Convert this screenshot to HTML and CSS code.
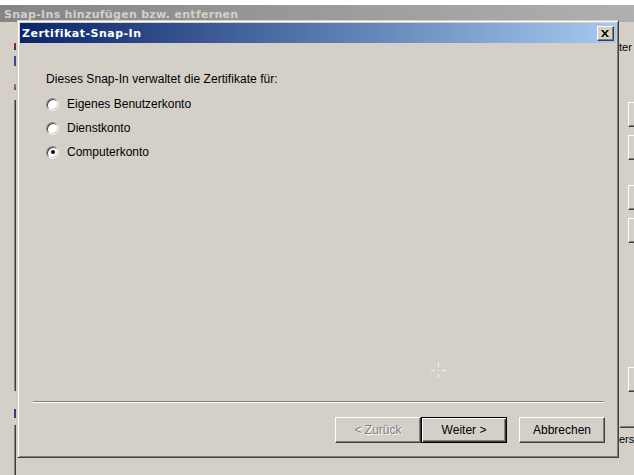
FILE: index.html
```html
<!DOCTYPE html>
<html lang="de">
<head>
<meta charset="utf-8">
<title>Zertifikat-Snap-In</title>
<link rel="stylesheet" href="styles.css">
</head>
<body>
<div class="desktop">
  <div class="bgwin">
    <div class="bg-title">Snap-Ins hinzufügen bzw. entfernen</div>
    <div class="bg-body">
      <div class="bg-left">
        <span class="frag frag-a"></span>
        <span class="frag frag-b"></span>
        <span class="frag frag-c"></span>
        <span class="list-edge"></span>
        <span class="frag frag-e"></span>
        <span class="desc-edge"></span>
      </div>
      <div class="bg-mid"></div>
      <div class="bg-right">
        <span class="peek-text">ter</span>
        <div class="bg-row">
          <span class="list-edge-r"></span>
          <div class="bg-buttons">
            <span class="bg-btn"></span>
            <span class="bg-btn b2"></span>
            <span class="bg-btn b3"></span>
            <span class="bg-btn b2"></span>
            <span class="bg-btn b5"></span>
          </div>
        </div>
        <div class="desc-box">
          <span class="peek-text peek-ers">ers</span>
        </div>
      </div>
    </div>
  </div>

  <div class="dialog">
    <div class="titlebar">
      <span class="title">Zertifikat-Snap-In</span>
      <span class="close-btn">
        <svg width="8" height="7" viewBox="0 0 8 7"><path d="M0 0H2L4 2.4L6 0H8L5.1 3.5L8 7H6L4 4.6L2 7H0L2.9 3.5Z" fill="#000"/></svg>
      </span>
    </div>
    <div class="content">
      <p class="intro">Dieses Snap-In verwaltet die Zertifikate für:</p>
      <div class="radios">
        <div class="radio-row"><span class="radio"></span><span>Eigenes Benutzerkonto</span></div>
        <div class="radio-row"><span class="radio"></span><span>Dienstkonto</span></div>
        <div class="radio-row"><span class="radio checked"></span><span>Computerkonto</span></div>
      </div>
      <div class="spacer"></div>
      <div class="separator"></div>
      <div class="button-row">
        <span class="btn btn-disabled">&lt; Zurück</span>
        <span class="btn btn-default">Weiter &gt;</span>
        <span class="btn btn-cancel">Abbrechen</span>
      </div>
    </div>
  </div>

  <svg class="cursor" width="15" height="15" viewBox="0 0 15 15">
    <g fill="#f2f1ec">
      <rect x="0" y="7" width="4" height="1"/>
      <rect x="11" y="7" width="4" height="1"/>
      <rect x="7" y="0" width="1" height="4"/>
      <rect x="7" y="11" width="1" height="4"/>
      <rect x="7" y="7" width="1" height="1"/>
    </g>
  </svg>
</div>
</body>
</html>
```

FILE: styles.css
```css
html, body {
  margin: 0;
  padding: 0;
  background: #ffffff;
}

.desktop {
  position: relative;
  width: 634px;
  height: 475px;
  overflow: hidden;
  background: #ffffff;
  font-family: "Liberation Sans", Arial, sans-serif;
  font-size: 12px;
  color: #000;
}

/* ---------- background window ---------- */
.bgwin {
  margin-top: 5px;
  display: flex;
  flex-direction: column;
  height: 470px;
}

.bg-title {
  height: 17px;
  line-height: 20px;
  padding-left: 4px;
  background: linear-gradient(to right, #858585, #b0b0b0);
  color: #d4d0c8;
  font-family: "DejaVu Sans", Verdana, sans-serif;
  font-weight: bold;
  font-size: 11px;
  letter-spacing: 0.3px;
  white-space: nowrap;
  overflow: hidden;
}

.bg-body {
  flex: 1;
  display: grid;
  grid-template-columns: 17px 1fr 15px;
  background: #d4d0c8;
}

.bg-left {
  display: flex;
  flex-direction: column;
  padding-left: 14px;
}

.frag {
  display: block;
  width: 2px;
}
.frag-a {
  margin-top: 21px;
  height: 7px;
  background: linear-gradient(#9a3030, #2a2f6a);
}
.frag-b {
  margin-top: 6px;
  height: 10px;
  background: #3a4a8e;
}
.frag-c {
  margin-top: 18px;
  height: 6px;
  background: linear-gradient(#c0763a, #3f5aa0);
}
.list-edge {
  display: block;
  margin-top: 10px;
  height: 291px;
  width: 2px;
  box-sizing: border-box;
  border-left: 1px solid #808080;
  background: #404040;
}
.frag-e {
  margin-top: 18px;
  height: 9px;
  background: #34407a;
}
.desc-edge {
  display: block;
  margin-top: 7px;
  flex: 1;
  width: 2px;
  box-sizing: border-box;
  border-left: 1px solid #808080;
  background: #404040;
}

.bg-right {
  display: flex;
  flex-direction: column;
  overflow: hidden;
}

.peek-text {
  display: block;
  margin-top: 19px;
  line-height: 13px;
  font-size: 11px;
  white-space: nowrap;
}

.bg-row {
  display: flex;
  margin-top: 48px;
}
.list-edge-r {
  display: block;
  margin-left: 2px;
  width: 1px;
  height: 293px;
  background: #ffffff;
}
.bg-buttons {
  display: flex;
  flex-direction: column;
  margin-left: 7px;
}
.bg-btn {
  display: block;
  width: 12px;
  height: 25px;
  box-sizing: border-box;
  border-left: 1px solid #fff;
  border-top: 1px solid #fff;
  border-bottom: 1px solid #404040;
  box-shadow: inset 0 -1px #808080;
}
.bg-btn.b2 { margin-top: 8px; }
.bg-btn.b3 { margin-top: 25px; }
.bg-btn.b5 { margin-top: 124px; }

.desc-box {
  margin-top: 32px;
  margin-left: 1px;
  flex: 1;
  border-top: 1px solid #404040;
  box-shadow: 0 -1px #808080;
}
.peek-ers {
  margin-top: 5px;
  margin-left: -1px;
}

/* ---------- dialog ---------- */
.dialog {
  position: absolute;
  left: 17px;
  top: 20px;
  width: 602px;
  height: 438px;
  box-sizing: border-box;
  background: #d4d0c8;
  border: 1px solid;
  border-color: #d4d0c8 #404040 #404040 #d4d0c8;
  box-shadow: inset 1px 1px #ffffff, inset -1px -1px #808080;
  padding: 2px;
  display: flex;
  flex-direction: column;
}

.titlebar {
  height: 20px;
  flex: none;
  display: flex;
  align-items: center;
  justify-content: space-between;
  padding: 0 2px 0 2px;
  background: linear-gradient(to right, #0a246a, #a6caf0);
}

.title {
  color: #ffffff;
  font-family: "DejaVu Sans", Verdana, sans-serif;
  font-weight: bold;
  font-size: 11px;
  letter-spacing: 0.5px;
  white-space: nowrap;
}

.close-btn {
  width: 17px;
  height: 15px;
  box-sizing: border-box;
  background: #d4d0c8;
  border: 1px solid;
  border-color: #ffffff #404040 #404040 #ffffff;
  box-shadow: inset -1px -1px #808080;
  display: flex;
  align-items: center;
  justify-content: center;
  padding-right: 1px;
}
.close-btn svg { display: block; }

.content {
  flex: 1;
  display: flex;
  flex-direction: column;
  padding: 29px 0 12px 13px;
}

.intro {
  margin: 0 0 0 13px;
  line-height: 14px;
  white-space: nowrap;
  letter-spacing: 0.05px;
}

.radios {
  margin: 6px 0 0 13px;
  display: flex;
  flex-direction: column;
}

.radio-row {
  height: 24px;
  display: flex;
  align-items: center;
  white-space: nowrap;
}

.radio {
  position: relative;
  width: 13px;
  height: 13px;
  box-sizing: border-box;
  border-radius: 50%;
  background: #ffffff;
  border: 1px solid;
  border-color: #8a8a8a #f4f4f4 #f4f4f4 #8a8a8a;
  box-shadow: inset 1px 1px #404040, inset -1px -1px #d4d0c8;
  margin-right: 8px;
  flex: none;
  display: flex;
  align-items: center;
  justify-content: center;
}
.radio.checked::after {
  content: "";
  width: 4px;
  height: 4px;
  border-radius: 50%;
  background: #000;
}

.spacer { flex: 1; }

.separator {
  margin-right: 12px;
  border-top: 1px solid #808080;
  border-bottom: 1px solid #ffffff;
  height: 0;
}

.button-row {
  margin-top: 14px;
  margin-right: 11px;
  display: flex;
  justify-content: flex-end;
}

.btn {
  width: 86px;
  height: 26px;
  box-sizing: border-box;
  background: #d4d0c8;
  border: 1px solid;
  border-color: #ffffff #404040 #404040 #ffffff;
  box-shadow: inset -1px -1px #808080;
  display: flex;
  align-items: center;
  justify-content: center;
  white-space: nowrap;
}
.btn-disabled {
  color: #808080;
  text-shadow: 1px 1px #ffffff;
}
.btn-default {
  border-color: #000000;
  box-shadow: inset 1px 1px #ffffff, inset -1px -1px #404040, inset -2px -2px #808080;
}
.btn-cancel {
  margin-left: 12px;
}

.cursor {
  position: absolute;
  left: 431px;
  top: 363px;
}
```
